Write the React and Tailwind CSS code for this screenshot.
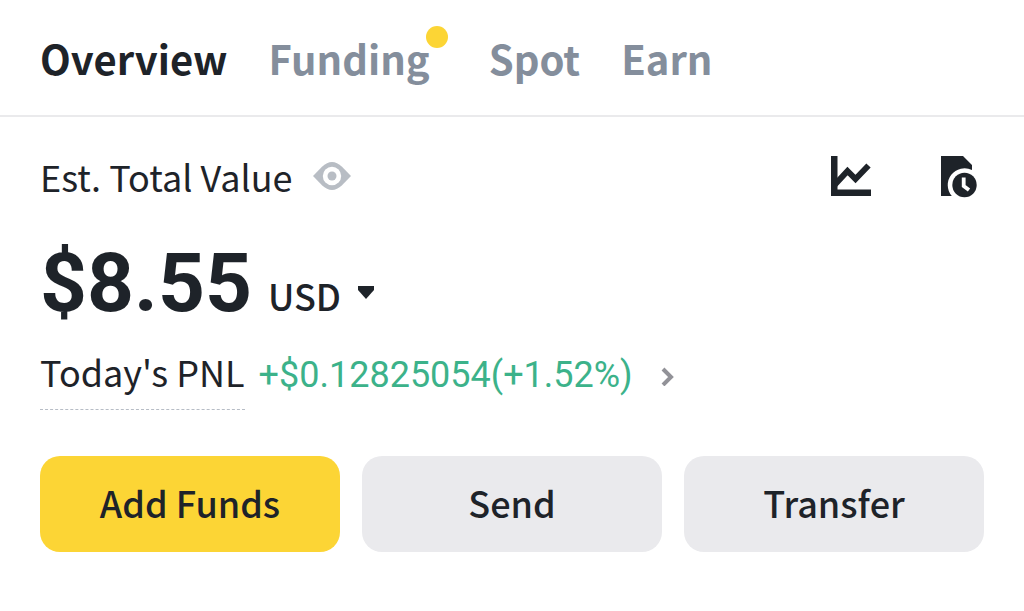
const latin = "font-['Noto_Sans_CJK_SC',sans-serif]";

function EyeIcon() {
  return (
    <svg width="38" height="28" viewBox="0 0 38 28" aria-hidden="true">
      <path fill="#b8bdc4" d="M0 14 9 4.800Q19-4.600 29 4.800L38 14 29 23.200Q19 32.600 9 23.200Z" />
      <circle cx="19" cy="14" r="9.2" fill="#fff" />
      <circle cx="19" cy="14" r="4.5" fill="#b8bdc4" />
    </svg>
  );
}

function ChartIcon() {
  return (
    <svg width="42" height="42" viewBox="0 0 42 42" aria-hidden="true">
      <path fill="#1e2329" d="M1 0h6.500v33.500H41V40H1z" />
      <path fill="none" stroke="#1e2329" strokeWidth="6" d="M5 28.500 17.500 15l8 8L38.500 9.500" />
    </svg>
  );
}

function HistoryIcon() {
  return (
    <svg width="38" height="42" viewBox="0 0 38 42" aria-hidden="true">
      <path fill="#1e2329" d="M1 0h22l9 9v5A16.800 16.800 0 0 0 11.800 40H1z" />
      <circle cx="24.500" cy="29" r="12.200" fill="#1e2329" />
      <path fill="none" stroke="#fff" strokeWidth="3.800" d="M23.700 21.500v8.500l5.300 4" />
    </svg>
  );
}

function Tab({ label, active, dot }) {
  return (
    <a
      href="#"
      aria-current={active ? "page" : undefined}
      className={`flex ${active ? "text-[#1e2329]" : "text-[#848e9c]"}`}
    >
      {label}
      {dot && <span className="-ml-1 -mt-1 size-[22px] rounded-full bg-[#fcd535]" />}
    </a>
  );
}

function Action({ label, primary }) {
  return (
    <button
      type="button"
      className={`h-24 rounded-[20px] pb-1 text-[36px] font-medium leading-[48px] text-[#1e2329] ${
        primary ? "bg-[#fcd535]" : "bg-[#eaeaed]"
      }`}
    >
      {label}
    </button>
  );
}

export default function App() {
  return (
    <main className={`bg-white text-[#1e2329] ${latin}`}>
      <nav className="flex gap-[41px] border-b-2 border-[#eaeaec] px-10 pt-[30px] pb-[29px] text-[40px] font-bold leading-[56px]">
        <Tab label="Overview" active />
        <Tab label="Funding" dot />
        <Tab label="Spot" />
        <Tab label="Earn" />
      </nav>
      <section className="px-10 pt-[35px]">
        <div className="flex items-center justify-between">
          <div className="flex items-center gap-5 text-[36px] leading-[48px]">
            <h1>Est. Total Value</h1>
            <button type="button" aria-label="Hide balance">
              <EyeIcon />
            </button>
          </div>
          <div className="flex gap-[68px] pt-[2px] pr-[6px]">
            <button type="button" aria-label="Profit chart">
              <ChartIcon />
            </button>
            <button type="button" aria-label="History">
              <HistoryIcon />
            </button>
          </div>
        </div>
        <div className="mt-[35px] flex items-baseline gap-4">
          <span className="font-[Roboto,sans-serif] text-[82px] font-bold leading-[96px]">$8.55</span>
          <button type="button" className="flex items-center gap-4 text-[36px] font-medium leading-[48px]">
            USD
            <svg width="18" height="20" viewBox="0 0 18 20" aria-hidden="true">
              <path fill="#1e2329" d="M1 1h16v4L9 14 1 5z" />
            </svg>
          </button>
        </div>
        <div className="mt-4 flex items-baseline gap-[14px] text-[36px] leading-[48px]">
          <span className="border-b border-dashed border-[#b7bdc6] pb-[14px]">Today's PNL</span>
          <a href="#" className="flex items-center gap-7 font-[Roboto,sans-serif] text-[#3cb28a]">
            +$0.12825054(+1.52%)
            <svg width="14" height="22" viewBox="0 0 14 22" fill="none" stroke="#929298" strokeWidth="4" aria-hidden="true">
              <path d="m2 5 8 8-8 8" />
            </svg>
          </a>
        </div>
        <div className="mt-[46px] grid grid-cols-3 gap-[22px]">
          <Action label="Add Funds" primary />
          <Action label="Send" />
          <Action label="Transfer" />
        </div>
      </section>
    </main>
  );
}
